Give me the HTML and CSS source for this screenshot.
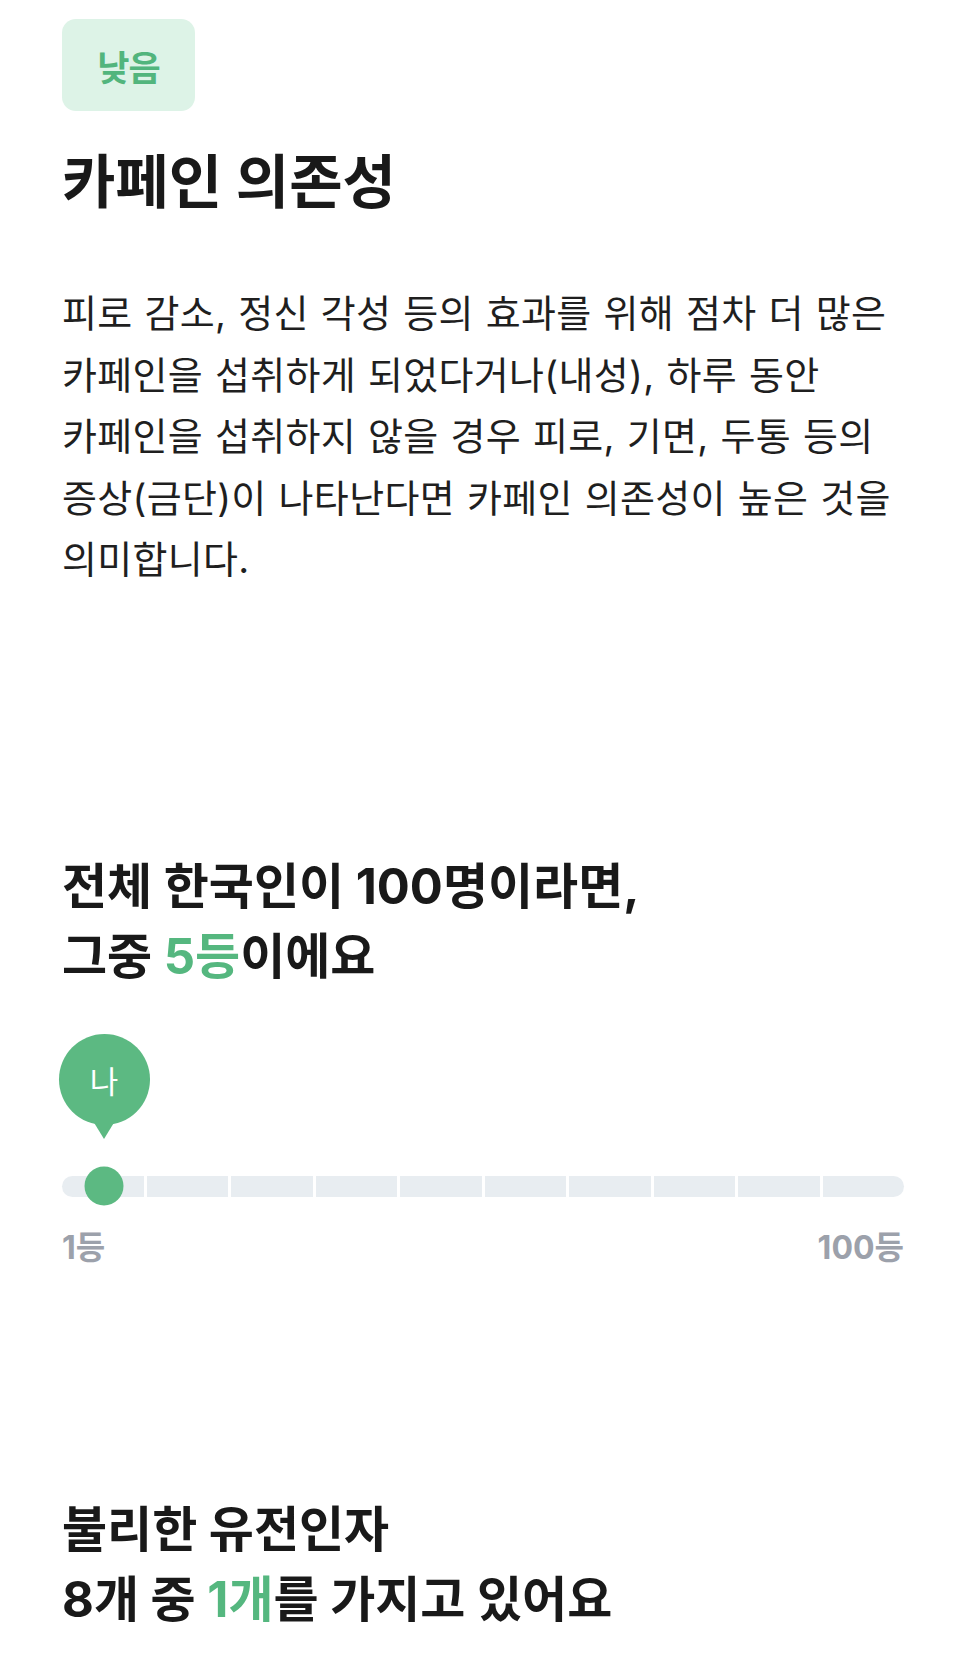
FILE: index.html
```html
<!DOCTYPE html>
<html lang="ko">
<head>
    <meta charset="UTF-8">
    <meta name="viewport" content="width=device-width, initial-scale=1.0">
    <title>카페인 의존성</title>
    <link rel="stylesheet" href="styles.css">
</head>
<body>
    <div class="page">
        <section class="intro">
            <span class="level-badge">낮음</span>
            <h1 class="trait-title">카페인 의존성</h1>
            <p class="trait-desc">피로 감소, 정신 각성 등의 효과를 위해 점차 더 많은<br>카페인을 섭취하게 되었다거나(내성), 하루 동안<br>카페인을 섭취하지 않을 경우 피로, 기면, 두통 등의<br>증상(금단)이 나타난다면 카페인 의존성이 높은 것을<br>의미합니다.</p>
        </section>

        <section class="rank">
            <h2 class="section-title">전체 한국인이 100명이라면,<br>그중 <em class="hl">5등</em>이에요</h2>
            <div class="rank-chart">
                <div class="rank-pin" style="left: 5%;">나</div>
                <div class="rank-track">
                    <div class="rank-seg"></div>
                    <div class="rank-seg"></div>
                    <div class="rank-seg"></div>
                    <div class="rank-seg"></div>
                    <div class="rank-seg"></div>
                    <div class="rank-seg"></div>
                    <div class="rank-seg"></div>
                    <div class="rank-seg"></div>
                    <div class="rank-seg"></div>
                    <div class="rank-seg"></div>
                    <div class="rank-dot" style="left: 5%;"></div>
                </div>
                <div class="rank-labels">
                    <span>1등</span>
                    <span>100등</span>
                </div>
            </div>
        </section>

        <section class="genes">
            <h2 class="section-title">불리한 유전인자<br>8개 중 <em class="hl">1개</em>를 가지고 있어요</h2>
        </section>
    </div>
</body>
</html>
```

FILE: styles.css
```css
body {
    margin: 0;
    padding: 0;
    background-color: #fff;
    color: #191919;
    font-family: Inter, "Noto Sans CJK KR", sans-serif;
}
.page {
    padding: 19px 62px 0;
}
.level-badge {
    display: flex;
    align-items: center;
    justify-content: center;
    width: 133px;
    height: 92px;
    border-radius: 14px;
    background-color: #ddf3e7;
    color: #52b57d;
    font-size: 35px;
    font-weight: 700;
    letter-spacing: -1px;
}
.trait-title {
    margin: 36px 0 0;
    font-size: 58px;
    line-height: 70px;
    font-weight: 700;
}
.trait-desc {
    margin: 66px 0 0;
    font-size: 38px;
    line-height: 61.5px;
    letter-spacing: 0.3px;
    word-spacing: 1px;
    color: #1f1f1f;
}
.rank {
    margin-top: 261px;
}
.section-title {
    margin: 0;
    font-size: 49px;
    line-height: 70px;
    font-weight: 700;
}
.hl {
    font-style: normal;
    color: #55b77f;
}
.rank-chart {
    position: relative;
    margin-top: 42px;
    padding-top: 142px;
}
.rank-pin {
    position: absolute;
    top: 0;
    width: 91px;
    height: 91px;
    margin-left: -45.5px;
    border-radius: 50%;
    background-color: #5cb982;
    color: #fff;
    font-size: 31px;
    display: flex;
    align-items: center;
    justify-content: center;
}
.rank-pin::after {
    content: "";
    position: absolute;
    left: 50%;
    bottom: -14px;
    margin-left: -11px;
    border-left: 11px solid transparent;
    border-right: 11px solid transparent;
    border-top: 18px solid #5cb982;
}
.rank-track {
    position: relative;
    display: flex;
    gap: 3px;
    height: 21px;
}
.rank-seg {
    flex: 1;
    background-color: #e8edf1;
}
.rank-seg:first-child {
    border-radius: 11px 0 0 11px;
}
.rank-seg:nth-child(10) {
    border-radius: 0 11px 11px 0;
}
.rank-dot {
    position: absolute;
    top: 50%;
    width: 39px;
    height: 39px;
    border-radius: 50%;
    background-color: #5cb982;
    transform: translate(-50%, -50%);
}
.rank-labels {
    display: flex;
    justify-content: space-between;
    margin-top: 33px;
    font-size: 32px;
    line-height: 36px;
    font-weight: 700;
    color: #9ca1ab;
}
.genes {
    margin-top: 229px;
}
```
